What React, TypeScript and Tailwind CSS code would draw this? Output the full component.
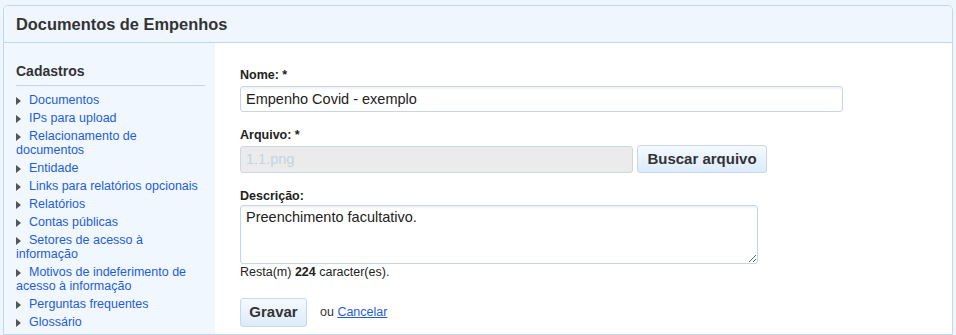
import React from 'react';

const menuItems = [
  'Documentos',
  'IPs para upload',
  'Relacionamento de documentos',
  'Entidade',
  'Links para relatórios opcionais',
  'Relatórios',
  'Contas públicas',
  'Setores de acesso à informação',
  'Motivos de indeferimento de acesso à informação',
  'Perguntas frequentes',
  'Glossário',
];

const Bullet = () => (
  <svg width="5" height="8" viewBox="0 0 5 8" className="inline-block mr-[8px]">
    <path d="M0 0 L5 4 L0 8 Z" fill="#555" />
  </svg>
);

export default function App() {
  return (
    <div
      className="h-screen overflow-hidden bg-[#edf5fd] pt-[5px] px-[3px] text-[#222]"
      style={{ fontFamily: '"Liberation Sans", Arial, sans-serif' }}
    >
      <div className="h-full flex flex-col border border-[#c3d7ec] rounded-t-[5px] overflow-hidden">
        {/* Header */}
        <div className="h-[37px] shrink-0 flex items-center px-[12px] bg-[#eff6fe] border-b border-[#c3d7ec]">
          <h1 className="text-[16.4px] font-bold text-[#333] leading-5">Documentos de Empenhos</h1>
        </div>

        <div className="flex flex-1 min-h-0">
          {/* Sidebar */}
          <aside className="w-[211px] shrink-0 bg-[#f0f7ff] pt-[20px] pl-[12px] pr-[10px]">
            <h2 className="text-[14px] font-bold text-[#333] leading-4 pb-[6px] border-b border-[#c5d5e6]">
              Cadastros
            </h2>
            <ul className="mt-[7px] text-[12.5px] leading-[14px]">
              {menuItems.map((item) => (
                <li key={item} className="mb-[4px]">
                  <Bullet />
                  <a href="#" className="text-[#1f5dd6]">
                    {item}
                  </a>
                </li>
              ))}
            </ul>
          </aside>

          {/* Form */}
          <main className="flex-1 bg-white pt-[25px] pl-[25px]">
            <label className="block text-[12.5px] font-bold leading-[14px]">Nome: *</label>
            <input
              readOnly
              defaultValue="Empenho Covid - exemplo"
              className="mt-[4px] block w-[603px] h-[26px] px-[5px] text-[14.5px] text-[#222] bg-white border border-[#c5d6ea] rounded-[3px] shadow-[inset_0_2px_2px_rgba(0,0,0,0.05)] outline-none"
            />

            <label className="block mt-[16px] text-[12.5px] font-bold leading-[14px]">Arquivo: *</label>
            <div className="mt-[3px] flex items-center gap-[4px]">
              <input
                disabled
                defaultValue="1.1.png"
                className="block w-[393px] h-[27px] px-[5px] text-[14.5px] text-[#c3d3e6] bg-[#ebebeb] border border-[#cbd8e6] rounded-[3px] outline-none"
              />
              <button className="h-[28px] w-[130px] text-[15px] font-bold text-[#333] border border-[#c5d8ec] rounded-[3px] bg-gradient-to-b from-[#f5faff] to-[#dcebfb]">
                Buscar arquivo
              </button>
            </div>

            <label className="block mt-[16px] text-[12.5px] font-bold leading-[14px]">Descrição:</label>
            <textarea
              readOnly
              defaultValue="Preenchimento facultativo."
              className="mt-[2px] block w-[518px] h-[59px] px-[5px] pt-[3px] text-[14.5px] leading-[17px] text-[#222] bg-white border border-[#c5d6ea] rounded-[3px] shadow-[inset_0_2px_2px_rgba(0,0,0,0.05)] outline-none"
            />
            <p className="mt-[1px] text-[12.5px] leading-[14px]">
              Resta(m) <b>224</b> caracter(es).
            </p>

            <div className="mt-[19px] flex items-center">
              <button className="h-[29px] w-[67px] text-[15px] font-bold text-[#333] border border-[#c5d8ec] rounded-[3px] bg-gradient-to-b from-[#f5faff] to-[#dcebfb]">
                Gravar
              </button>
              <span className="ml-[13px] text-[12.5px] text-[#333]">
                ou{' '}
                <a href="#" className="text-[#1f5dd6] underline">
                  Cancelar
                </a>
              </span>
            </div>
          </main>
        </div>
      </div>
    </div>
  );
}
